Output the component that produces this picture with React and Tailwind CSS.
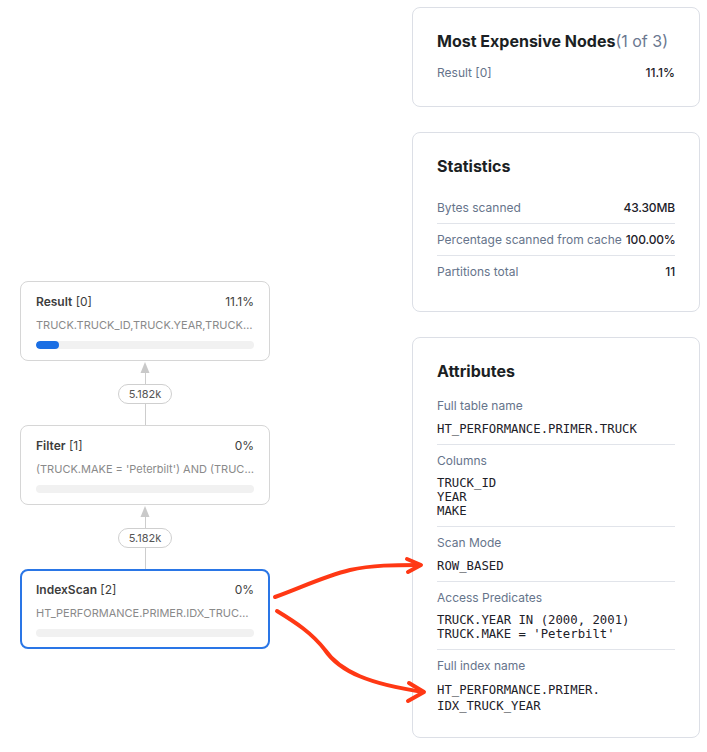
import React from "react";

const sans = { fontFamily: "Inter, 'Noto Sans', sans-serif" };

function NodeCard({ name, idx, pct, desc, fill, selected }) {
  return (
    <div
      className={
        "w-[250px] h-[80px] rounded-lg bg-white flex flex-col " +
        (selected
          ? "border-2 border-[#2a76e6] px-[14px] pt-[11px]"
          : "border border-[#d6d6d6] px-[15px] pt-[12px]")
      }
    >
      <div className="flex justify-between items-center h-[16px] text-[12px] text-[#3d3d3d]">
        <span>
          <span className="font-semibold">{name}</span> [{idx}]
        </span>
        <span>{pct}</span>
      </div>
      <div className="mt-[7px] h-[16px] leading-[16px] text-[11px] text-[#8a8a8a] truncate">
        {desc}
      </div>
      <div className="mt-[8px] h-[8px] rounded-full bg-[#f1f1f1] overflow-hidden">
        {fill ? <div className="h-full w-[23px] rounded-full bg-[#1b6fe4]" /> : null}
      </div>
    </div>
  );
}

function Connector({ label }) {
  return (
    <div className="w-[250px] h-[64px] flex flex-col items-center">
      <svg width="10" height="11" viewBox="0 0 10 11" className="mt-[1px] block">
        <polygon points="5,0 9.5,11 0.5,11" fill="#c9c9c9" />
      </svg>
      <div className="w-px h-[11px] bg-[#cdcdcd]" />
      <div className="h-[20px] px-[10px] rounded-full border border-[#cfcfcf] text-[11px] leading-[18px] text-[#555]">
        {label}
      </div>
      <div className="w-px flex-1 bg-[#cdcdcd]" />
    </div>
  );
}

function StatRow({ label, value, last }) {
  return (
    <div
      className={
        "h-[32px] flex items-center justify-between gap-[4px] text-[12px] " +
        (last ? "" : "border-b border-[#e1e4ea]")
      }
    >
      <span className="text-[#66748b] whitespace-nowrap">{label}</span>
      <span className="text-[#1d2129] font-medium tracking-[-0.15px] whitespace-nowrap">{value}</span>
    </div>
  );
}

function AttrSection({ label, lines, first, last, lh = "leading-[14px]", gap = "mt-[8px]" }) {
  return (
    <div
      className={
        (first ? "mt-[15px]" : "pt-[8px]") +
        " " +
        (last ? "pb-[23px]" : "pb-[8px] border-b border-[#e1e4ea]")
      }
    >
      <div className="text-[12px] leading-[16px] text-[#66748b]">{label}</div>
      <div
        className={gap + " text-[12.3px] text-[#1d2129] " + lh}
        style={{ fontFamily: "'DejaVu Sans Mono', 'Liberation Mono', monospace" }}
      >
        {lines.map((l, i) => (
          <div key={i} className="whitespace-pre">
            {l}
          </div>
        ))}
      </div>
    </div>
  );
}

export default function App() {
  return (
    <div className="relative w-[707px] h-[752px] bg-white overflow-hidden" style={sans}>
      <div className="flex">
        <div className="w-[412px] pl-[20px] pt-[281px] flex flex-col">
          <NodeCard
            name="Result"
            idx="0"
            pct="11.1%"
            desc="TRUCK.TRUCK_ID,TRUCK.YEAR,TRUCK.MAKE"
            fill
          />
          <Connector label="5.182k" />
          <NodeCard
            name="Filter"
            idx="1"
            pct="0%"
            desc="(TRUCK.MAKE = 'Peterbilt') AND (TRUCK.YEAR IN (2000, 2001))"
          />
          <Connector label="5.182k" />
          <NodeCard
            name="IndexScan"
            idx="2"
            pct="0%"
            desc="HT_PERFORMANCE.PRIMER.IDX_TRUCK_YEAR"
            selected
          />
        </div>

        <div className="w-[288px] pt-[7px] flex flex-col gap-[25px]">
          <div className="rounded-lg border border-[#dcdfe6] px-[24px] pt-[21px] pb-[25px]">
            <div className="h-[24px] flex items-center text-[16px] text-[#1b1f24]">
              <span className="font-bold">Most Expensive Nodes</span>
              <span className="text-[#6b7890]">(1 of 3)</span>
            </div>
            <div className="mt-[12px] h-[16px] flex items-center justify-between text-[12px]">
              <span className="text-[#66748b]">Result [0]</span>
              <span className="text-[#1d2129] font-medium">11.1%</span>
            </div>
          </div>

          <div className="rounded-lg border border-[#dcdfe6] px-[24px] pt-[21px] pb-[23px]">
            <div className="h-[24px] flex items-center text-[16px] font-bold text-[#1b1f24]">
              Statistics
            </div>
            <div className="mt-[14px]">
              <StatRow label="Bytes scanned" value="43.30MB" />
              <StatRow label="Percentage scanned from cache" value="100.00%" />
              <StatRow label="Partitions total" value="11" last />
            </div>
          </div>

          <div className="rounded-lg border border-[#dcdfe6] px-[24px] pt-[21px]">
            <div className="h-[24px] flex items-center text-[16px] font-bold text-[#1b1f24]">
              Attributes
            </div>
            <AttrSection first label="Full table name" lines={["HT_PERFORMANCE.PRIMER.TRUCK"]} />
            <AttrSection label="Columns" lines={["TRUCK_ID", "YEAR", "MAKE"]} gap="mt-[7px]" />
            <AttrSection label="Scan Mode" lines={["ROW_BASED"]} />
            <AttrSection
              label="Access Predicates"
              lines={["TRUCK.YEAR IN (2000, 2001)", "TRUCK.MAKE = 'Peterbilt'"]}
              gap="mt-[7px]"
            />
            <AttrSection
              last
              label="Full index name"
              lines={["HT_PERFORMANCE.PRIMER.", "IDX_TRUCK_YEAR"]}
              lh="leading-[16px]"
            />
          </div>
        </div>
      </div>

      <svg
        className="absolute left-0 top-0 pointer-events-none"
        width="707"
        height="752"
        viewBox="0 0 707 752"
        fill="none"
        stroke="#ff3814"
        strokeWidth="4"
        strokeLinecap="round"
        strokeLinejoin="round"
      >
        <path d="M275 597 C 300 588, 325 576, 350 570 C 372 565, 395 565, 419 565" />
        <path d="M407 559 L421 565 L408 572" />
        <path d="M277 611 C 295 622, 312 633, 325 650 C 340 672, 370 684, 423 692" />
        <path d="M409 683 L424 692 L408 701" />
      </svg>
    </div>
  );
}
